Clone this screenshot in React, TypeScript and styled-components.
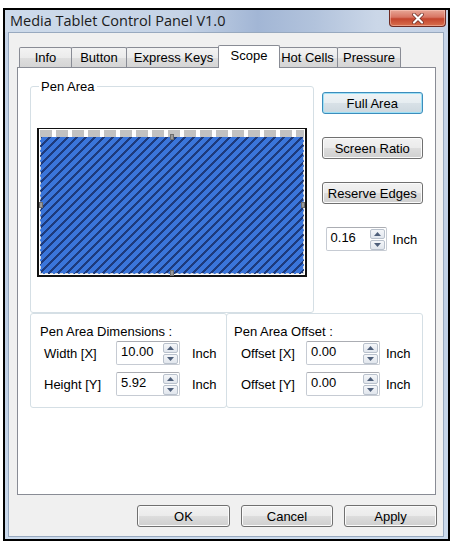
import styled, { createGlobalStyle } from "styled-components";

const GlobalStyle = createGlobalStyle`
  html, body {
    margin: 0;
    background: #ffffff;
  }
  body {
    font-family: "Liberation Sans", Arial, sans-serif;
    font-size: 13px;
    color: #000;
  }
  * {
    box-sizing: border-box;
  }
`;

const Window = styled.div`
  width: 447px;
  height: 533px;
  margin: 8px 0 0 3px;
  border: 2px solid #000;
  background: linear-gradient(180deg, #c7d5e8 0%, #bfcfe4 60%, #cbdaec 100%);
  display: flex;
  flex-direction: column;
`;

const TitleBar = styled.div`
  height: 22px;
  display: flex;
  align-items: flex-start;
  justify-content: space-between;
  background: linear-gradient(
    90deg,
    #cddaea 0%,
    #c5d3e6 40%,
    #a2b6d5 57%,
    #b2c3dc 70%,
    #cbd7e8 84%,
    #c3d1e5 100%
  );
`;

const Title = styled.span`
  font-family: "Open Sans", "Liberation Sans", sans-serif;
  font-size: 14.5px;
  line-height: 22px;
  padding-left: 5px;
  color: #1b1b1b;
`;

const CloseButton = styled.div`
  width: 57px;
  height: 17px;
  margin-right: 2px;
  border: 1px solid #6e2b23;
  border-top: none;
  border-radius: 0 0 4px 4px;
  background: linear-gradient(180deg, #e8a797 0%, #d87563 45%, #c4452e 55%, #d8704e 100%);
  box-shadow: inset 0 0 0 1px rgba(255, 210, 200, 0.45);
  display: flex;
  align-items: center;
  justify-content: center;
`;

const Client = styled.div`
  flex: 1;
  margin: 0 4px 2px 3px;
  border: 1px solid #98a9bf;
  background: #f0f0f0;
  padding: 12px 7px 0 8px;
  display: flex;
  flex-direction: column;
`;

const TabStrip = styled.div`
  height: 23px;
  margin-bottom: -1px;
  padding-left: 2px;
  display: flex;
  align-items: flex-start;
  position: relative;
  z-index: 1;
`;

const Tab = styled.div<{ $w: number; $active?: boolean }>`
  width: ${(p) => p.$w}px;
  height: ${(p) => (p.$active ? 23 : 20)}px;
  margin-top: ${(p) => (p.$active ? 0 : 2)}px;
  margin-left: ${(p) => (p.$active ? -3 : -1)}px;
  margin-right: ${(p) => (p.$active ? -2 : 0)}px;
  padding-bottom: ${(p) => (p.$active ? 3 : 0)}px;
  border: 1px solid #898c95;
  border-bottom: none;
  border-radius: 2px 2px 0 0;
  background: ${(p) =>
    p.$active
      ? "#ffffff"
      : "linear-gradient(180deg, #f3f3f3 0%, #ebebeb 50%, #dedede 51%, #d5d5d5 100%)"};
  position: relative;
  z-index: ${(p) => (p.$active ? 2 : 1)};
  display: flex;
  align-items: center;
  justify-content: center;
  white-space: nowrap;

  &:first-child {
    margin-left: 0;
  }
`;

const Panel = styled.div`
  height: 428px;
  border: 1px solid #898c95;
  background: #ffffff;
  padding: 11px 12px 0 12px;
`;

const TopRow = styled.div`
  display: flex;
  gap: 8px;
`;

const GroupBox = styled.fieldset`
  width: 285px;
  height: 234px;
  margin: 0;
  padding: 0 6px;
  min-inline-size: 0;
  border: 1px solid #d5dfe5;
  border-radius: 3px;
`;

const Legend = styled.legend`
  margin-left: 2px;
  padding: 0 2px;
  line-height: 15px;
`;

const Canvas = styled.div`
  width: 270px;
  height: 149px;
  margin-top: 34px;
  border: 2px solid #111;
  border-top-width: 1px;
  background: #ffffff;
  padding: 1px;
  display: flex;
  flex-direction: column;
`;

const Ruler = styled.div`
  height: 7px;
  background: repeating-linear-gradient(
    90deg,
    #c2c2c2 0 12px,
    #ffffff 12px 16px
  );
`;

/* 9px tile with one "/" stripe through the middle and halves at the corners */
const Hatch = styled.div`
  flex: 1;
  position: relative;
  border: 1px dashed #d9d9d9;
  border-top: none;
  background-color: #3a75da;
  background-image: linear-gradient(
    135deg,
    #1d3a7c 0 6%,
    #3a75da 6% 44%,
    #1d3a7c 44% 56%,
    #3a75da 56% 94%,
    #1d3a7c 94% 100%
  );
  background-size: 9px 9px;
`;

const Handle = styled.span<{ $x: string; $y: string }>`
  position: absolute;
  left: ${(p) => p.$x};
  top: ${(p) => p.$y};
  width: 4px;
  height: 6px;
  margin: -3px 0 0 -2px;
  background: #9a9a9a;
  border: 1px solid #6e6e6e;
`;

const SideColumn = styled.div`
  width: 102px;
  padding-top: 13px;
  display: flex;
  flex-direction: column;
  gap: 23px;
`;

const Button = styled.button<{ $default?: boolean; $w?: number }>`
  width: ${(p) => (p.$w ? `${p.$w}px` : "100%")};
  height: 22px;
  padding: 0;
  font-family: inherit;
  font-size: 13px;
  color: #000;
  border: 1px solid ${(p) => (p.$default ? "#3c8dbc" : "#707070")};
  border-radius: 3px;
  background: ${(p) =>
    p.$default
      ? "linear-gradient(180deg, #eef3f6 0%, #e6edf1 50%, #d8e1e7 51%, #cdd8df 100%)"
      : "linear-gradient(180deg, #f2f2f2 0%, #ebebeb 50%, #dddddd 51%, #cfcfcf 100%)"};
  box-shadow: inset 0 0 0 1px
    ${(p) => (p.$default ? "#9ee0f5" : "#fbfbfb")};
`;

const SpinRow = styled.div<{ $gap: number; $indent?: number }>`
  display: flex;
  align-items: center;
  gap: ${(p) => p.$gap}px;
  margin-left: ${(p) => p.$indent ?? 0}px;
`;

const SpinField = styled.div<{ $w: number }>`
  width: ${(p) => p.$w}px;
  height: 24px;
  border: 1px solid #c6cbd3;
  border-top-color: #abadb3;
  border-radius: 2px;
  background: #ffffff;
  display: flex;
  align-items: flex-start;
  justify-content: space-between;
  padding: 0 1px 0 4px;
`;

const SpinValue = styled.span`
  line-height: 19px;
`;

const SpinButtons = styled.div`
  width: 15px;
  padding-top: 1px;
  display: flex;
  flex-direction: column;
  gap: 1px;
`;

const SpinButton = styled.div`
  height: 10px;
  border: 1px solid #b9c1cc;
  border-radius: 2px;
  background: linear-gradient(180deg, #f4f6f9 0%, #e1e6ed 100%);
  display: flex;
  align-items: center;
  justify-content: center;
`;

const BottomRow = styled.div`
  display: flex;
`;

const SubBox = styled.div<{ $w: number; $pad: number }>`
  width: ${(p) => p.$w}px;
  height: 95px;
  border: 1px solid #d5dfe5;
  border-radius: 3px;
  padding: 10px 0 0 ${(p) => p.$pad}px;
  display: flex;
  flex-direction: column;

  & + & {
    margin-left: -1px;
  }
`;

const SubTitle = styled.div`
  line-height: 15px;
  margin-bottom: 2px;
`;

const FieldRow = styled.div<{ $indent: number }>`
  display: flex;
  align-items: center;
  margin-left: ${(p) => p.$indent}px;

  & + & {
    margin-top: 7px;
  }
`;

const FieldLabel = styled.span<{ $w: number }>`
  width: ${(p) => p.$w}px;
`;

const Unit = styled.span<{ $gap: number }>`
  margin-left: ${(p) => p.$gap}px;
`;

const DialogButtons = styled.div`
  display: flex;
  justify-content: flex-end;
  gap: 11px;
  margin: 10px -1px 0 0;
`;

const Arrow = ({ up }: { up?: boolean }) => (
  <svg width="7" height="4" viewBox="0 0 7 4">
    <path d={up ? "M0 4 L3.5 0 L7 4 Z" : "M0 0 L3.5 4 L7 0 Z"} fill="#4e5f7a" />
  </svg>
);

const Spin = ({ w, value }: { w: number; value: string }) => (
  <SpinField $w={w}>
    <SpinValue>{value}</SpinValue>
    <SpinButtons>
      <SpinButton>
        <Arrow up />
      </SpinButton>
      <SpinButton>
        <Arrow />
      </SpinButton>
    </SpinButtons>
  </SpinField>
);

const tabs = [
  { label: "Info", w: 53 },
  { label: "Button", w: 56 },
  { label: "Express Keys", w: 95 },
  { label: "Scope", w: 62, active: true },
  { label: "Hot Cells", w: 61 },
  { label: "Pressure", w: 64 },
];

const App = () => (
  <>
    <GlobalStyle />
    <Window>
      <TitleBar>
        <Title>Media Tablet Control Panel V1.0</Title>
        <CloseButton>
          <svg width="14" height="11" viewBox="0 0 14 11">
            <path
              d="M3 1.5 L11 9.5 M11 1.5 L3 9.5"
              stroke="#6a2a22"
              strokeWidth="3.6"
              strokeLinecap="round"
            />
            <path
              d="M3 1.5 L11 9.5 M11 1.5 L3 9.5"
              stroke="#ffffff"
              strokeWidth="2.2"
              strokeLinecap="round"
            />
          </svg>
        </CloseButton>
      </TitleBar>
      <Client>
        <TabStrip>
          {tabs.map((t) => (
            <Tab key={t.label} $w={t.w} $active={t.active}>
              {t.label}
            </Tab>
          ))}
        </TabStrip>
        <Panel>
          <TopRow>
            <GroupBox>
              <Legend>Pen Area</Legend>
              <Canvas>
                <Ruler />
                <Hatch>
                  <Handle $x="0px" $y="50%" />
                  <Handle $x="100%" $y="50%" />
                  <Handle $x="50%" $y="100%" />
                  <Handle $x="50%" $y="0px" />
                </Hatch>
              </Canvas>
            </GroupBox>
            <SideColumn>
              <Button $default>Full Area</Button>
              <Button>Screen Ratio</Button>
              <Button>Reserve Edges</Button>
              <SpinRow $gap={6} $indent={4}>
                <Spin w={61} value="0.16" />
                <span>Inch</span>
              </SpinRow>
            </SideColumn>
          </TopRow>
          <BottomRow>
            <SubBox $w={197} $pad={9}>
              <SubTitle>Pen Area Dimensions :</SubTitle>
              <FieldRow $indent={4}>
                <FieldLabel $w={72}>Width [X]</FieldLabel>
                <Spin w={64} value="10.00" />
                <Unit $gap={12}>Inch</Unit>
              </FieldRow>
              <FieldRow $indent={4}>
                <FieldLabel $w={72}>Height [Y]</FieldLabel>
                <Spin w={64} value="5.92" />
                <Unit $gap={12}>Inch</Unit>
              </FieldRow>
            </SubBox>
            <SubBox $w={197} $pad={7}>
              <SubTitle>Pen Area Offset :</SubTitle>
              <FieldRow $indent={7}>
                <FieldLabel $w={65}>Offset [X]</FieldLabel>
                <Spin w={74} value="0.00" />
                <Unit $gap={6}>Inch</Unit>
              </FieldRow>
              <FieldRow $indent={7}>
                <FieldLabel $w={65}>Offset [Y]</FieldLabel>
                <Spin w={74} value="0.00" />
                <Unit $gap={6}>Inch</Unit>
              </FieldRow>
            </SubBox>
          </BottomRow>
        </Panel>
        <DialogButtons>
          <Button $w={93}>OK</Button>
          <Button $w={92}>Cancel</Button>
          <Button $w={93}>Apply</Button>
        </DialogButtons>
      </Client>
    </Window>
  </>
);

export default App;
